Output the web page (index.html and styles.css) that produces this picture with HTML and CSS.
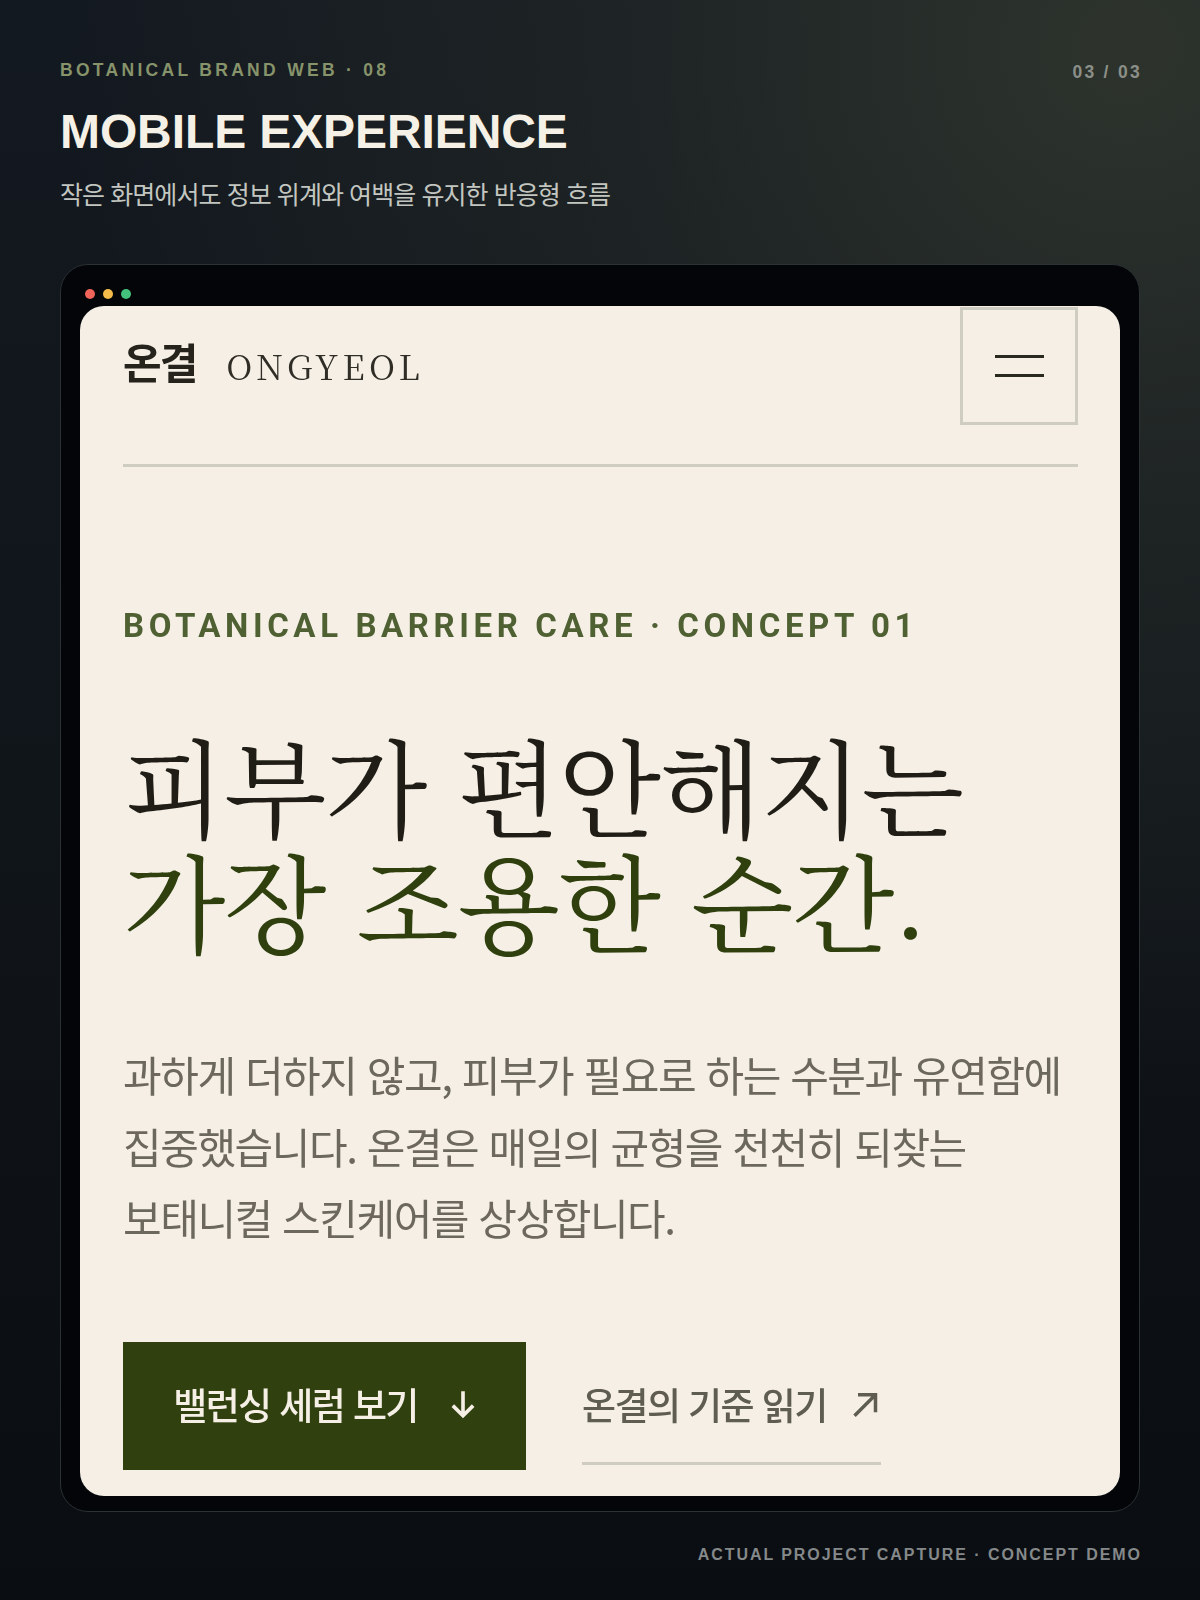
FILE: index.html
```html
<!DOCTYPE html>
<html lang="ko">
<head>
<meta charset="utf-8">
<title>Mobile Experience</title>
<link rel="stylesheet" href="styles.css">
</head>
<body>
<main class="slide">
  <header class="slide-head">
    <div class="slide-titles">
      <p class="kicker">BOTANICAL BRAND WEB · 08</p>
      <h2 class="slide-title">MOBILE EXPERIENCE</h2>
      <p class="slide-sub">작은 화면에서도 정보 위계와 여백을 유지한 반응형 흐름</p>
    </div>
    <p class="pager">03 / 03</p>
  </header>
  <section class="frame">
    <div class="dots"><i class="dot red"></i><i class="dot yellow"></i><i class="dot green"></i></div>
    <div class="screen">
      <nav class="nav">
        <div class="brand"><span class="brand-ko">온결</span><span class="brand-en">ONGYEOL</span></div>
        <button class="menu" aria-label="menu"><i class="bar"></i><i class="bar"></i></button>
      </nav>
      <div class="hero">
        <p class="eyebrow">BOTANICAL BARRIER CARE · CONCEPT 01</p>
        <h1 class="headline">피부가 편안해지는<br><em class="accent">가장 조용한 순간.</em></h1>
        <p class="lead">과하게 더하지 않고, 피부가 필요로 하는 수분과 유연함에<br>집중했습니다. 온결은 매일의 균형을 천천히 되찾는<br>보태니컬 스킨케어를 상상합니다.</p>
        <div class="actions">
          <a class="btn">밸런싱 세럼 보기
            <svg class="ico ico-down" viewBox="0 0 24 28"><path d="M12 2v23M2.500 15.500 12 25l9.500-9.500"/></svg>
          </a>
          <a class="link">온결의 기준 읽기
            <svg class="ico ico-out" viewBox="0 0 24 24"><path d="M3 22 21 4M6 4h15v15"/></svg>
          </a>
        </div>
      </div>
    </div>
  </section>
  <footer class="foot">ACTUAL PROJECT CAPTURE · CONCEPT DEMO</footer>
</main>
</body>
</html>
```
FILE: styles.css
```css
* { box-sizing: border-box; }
html, body { margin: 0; padding: 0; }
body {
  width: 1200px;
  height: 1600px;
  overflow: hidden;
  background:
    radial-gradient(circle at 94% 3%, #2d332c 0%, rgba(45, 51, 44, 0.45) 25%, rgba(45, 51, 44, 0) 55%),
    linear-gradient(180deg, #131920 0%, #10151a 50%, #0a0d12 100%);
  font-family: "Liberation Sans", "Noto Sans CJK KR", sans-serif;
}
p, h1, h2 { margin: 0; }
.slide { padding: 60px 60px 0; display: flex; flex-direction: column; }
.slide-head { display: flex; justify-content: space-between; align-items: flex-start; height: 204px; }
.kicker { font-size: 17.500px; line-height: 20px; font-weight: 700; letter-spacing: 3.3px; color: #87936a; }
.slide-title { margin-top: 25px; font-size: 48px; line-height: 54px; font-weight: 700; letter-spacing: -0.1px; color: #f5f1e6; }
.slide-sub { margin-top: 16px; font-family: "Noto Sans CJK KR", sans-serif; font-size: 25px; line-height: 36px; letter-spacing: -0.93px; color: #c3c6c0; }
.pager { margin: 2px -2px 0 0; font-size: 17.500px; line-height: 20px; font-weight: 700; letter-spacing: 2.3px; color: #8b8f88; }
.frame {
  height: 1248px;
  padding: 0 19px 15px;
  display: flex;
  flex-direction: column;
  background: #030508;
  border: 1px solid #2c3134;
  border-radius: 28px;
}
.dots { height: 41px; padding: 24px 5px 0; display: flex; gap: 8px; }
.dot { width: 10px; height: 10px; border-radius: 50%; }
.red { background: #f0645a; }
.yellow { background: #f3bb4a; }
.green { background: #43c27c; }
.screen { flex: 1; padding: 2px 42px 0 43px; background: #f5efe6; border-radius: 24px; overflow: hidden; display: flex; flex-direction: column; filter: blur(0.6px); }
.nav { display: flex; justify-content: space-between; align-items: center; height: 159px; padding-bottom: 41px; border-bottom: 3px solid #cfccc1; }
.brand { display: flex; align-items: center; gap: 30px; }
.brand-ko { font-family: "Noto Sans CJK KR", sans-serif; font-size: 42px; line-height: 50px; font-weight: 700; letter-spacing: -2px; color: #25231c; margin-bottom: 10px; }
.brand-en { font-family: "Noto Serif CJK KR", "Liberation Serif", serif; font-size: 34px; line-height: 44px; letter-spacing: 4.3px; color: #2f2d26; }
.menu { width: 118px; height: 118px; padding: 0; background: none; border: 3px solid #cfccc1; display: flex; flex-direction: column; align-items: center; justify-content: center; gap: 16px; }
.bar { width: 49px; height: 3px; background: #2a2920; }
.hero { padding-top: 139px; }
.eyebrow { font-family: Roboto, sans-serif; font-size: 33px; line-height: 40px; font-weight: 700; letter-spacing: 4.6px; color: #4f6132; }
.headline { margin-top: 80px; font-family: "Noto Serif CJK KR", "Noto Sans CJK KR", sans-serif; font-size: 106px; line-height: 115px; font-weight: 400; letter-spacing: -1.4px; color: #1f1d16; }
.accent { font-style: normal; color: #2f400e; }
.lead { margin-top: 82px; font-family: "Noto Sans CJK KR", sans-serif; font-size: 42px; line-height: 71.5px; letter-spacing: -1.45px; color: #6c685e; }
.actions { margin-top: 89px; display: flex; gap: 56px; align-items: flex-start; }
.btn { width: 403px; height: 128px; padding-bottom: 4px; background: #30400f; color: #f5efe6; display: flex; align-items: center; justify-content: center; gap: 32px; font-family: "Noto Sans CJK KR", sans-serif; font-size: 37px; font-weight: 500; letter-spacing: -1.6px; }
.link { height: 123px; width: 299px; display: flex; align-items: center; justify-content: space-between; padding-top: 4px; border-bottom: 3px solid #cfccc1; color: #5f5c52; font-family: "Noto Sans CJK KR", sans-serif; font-size: 37px; font-weight: 500; letter-spacing: -1.6px; }
.ico { width: 28px; height: 28px; fill: none; stroke: currentColor; stroke-width: 3; }
.ico-down { width: 26px; height: 30px; stroke-width: 3.4; }
.ico-out { margin-right: 2px; }
.foot { margin: 33px -2px 0 0; text-align: right; font-size: 16px; line-height: 20px; font-weight: 700; letter-spacing: 1.95px; color: #85898a; }
```
